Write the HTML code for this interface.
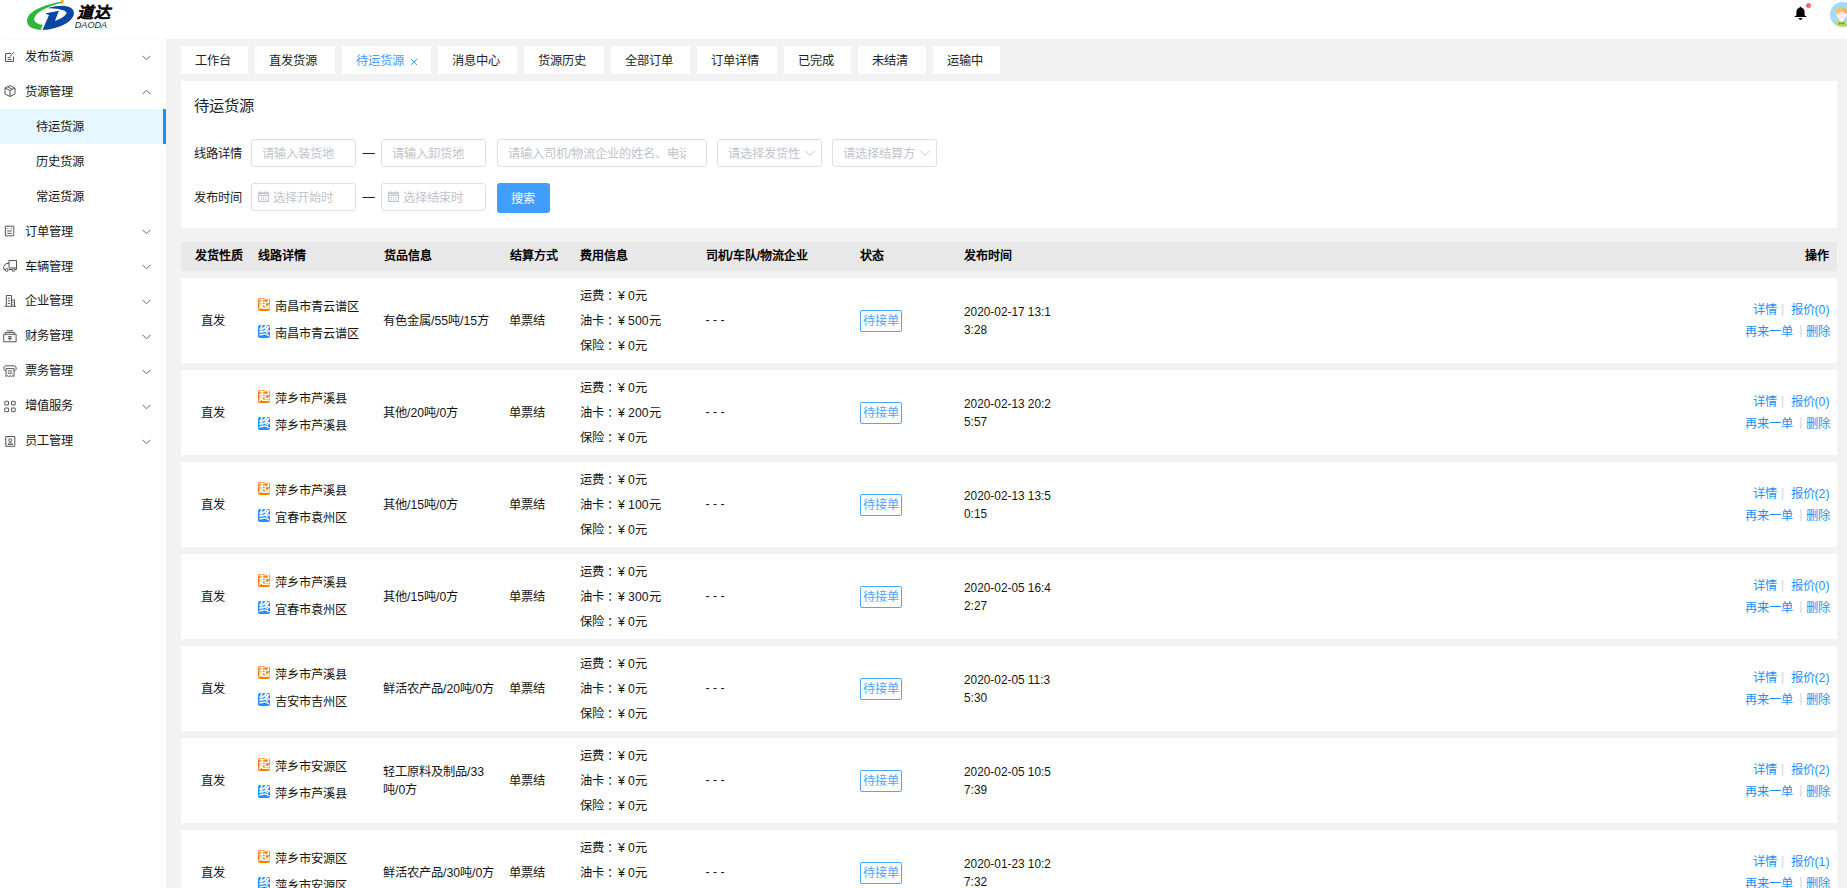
<!DOCTYPE html>
<html lang="zh-CN">
<head>
<meta charset="utf-8">
<title>待运货源</title>
<style>
*{box-sizing:border-box;margin:0;padding:0}
html,body{width:1847px;height:888px;overflow:hidden}
body{position:relative;background:#f2f2f2;font-family:"Liberation Sans",sans-serif;font-size:12.25px;color:#222;line-height:1}
.abs{position:absolute}
/* header */
#hd{left:0;top:0;width:1847px;height:37px;background:#fff;z-index:3}
#hs{left:0;top:37px;width:166px;height:2px;background:linear-gradient(#fafafa,#fcfcfc);z-index:4}
#hd2{left:0;top:0;width:1847px;height:39px;background:#fff;z-index:1}
/* sidebar */
#sb{left:0;top:39px;width:166px;height:849px;background:#fff;z-index:2}
.mi{position:relative;height:34.93px;line-height:36px;padding-left:25px;font-size:12.25px;color:#161616;white-space:nowrap}
.mi.sub{padding-left:36px}
.mi.on{background:#e6f7ff}
.mi.on:after{content:"";position:absolute;right:0;top:0;width:3px;height:34.93px;background:#1890ff}
.mi svg.ic{position:absolute;left:3px;top:10.5px;width:14px;height:14px;fill:none;stroke:#555;stroke-width:1}
.mi svg.ar{position:absolute;left:141.5px;top:15.5px;width:9px;height:6px;fill:none;stroke:#666;stroke-width:1}
/* tabs */
.tab{top:46px;height:28px;background:#fff;line-height:31px;text-align:left;padding-left:13.6px;font-size:12.25px;color:#222;white-space:nowrap}
.tab.on{color:#409eff;padding-left:14px}
/* filter card */
#fc{left:181px;top:81px;width:1656px;height:147px;background:#fff}
.lbl{font-size:12.25px;color:#222;white-space:nowrap}
.inp{height:28px;border:1px solid #dcdfe6;border-radius:3px;background:#fff;font-size:12.25px;color:#c0c4cc;line-height:29px;padding-left:10px;white-space:nowrap;overflow:hidden}
.dash{font-size:12.25px;color:#222}
/* table */
#th{left:181px;top:242px;width:1656px;height:29px;background:#e8e8e8;font-weight:700;font-size:12px;color:#000}
#th span{position:absolute;top:8px;white-space:nowrap}
.row{left:181px;width:1656px;height:85px;background:#fff;font-size:12.25px;color:#141414}
.row .c{position:absolute;white-space:nowrap}
.zf{left:19.7px;top:36.5px}
.rt{left:76.5px;padding-left:17px}
.r1{top:22.5px}.r2{top:49.5px}
.rt i{position:absolute;left:0.5px;top:-2.5px;width:12px;height:13px;border-radius:2px;color:#fff;font-style:normal;font-size:11px;line-height:12.5px;text-align:center;overflow:hidden;font-weight:700}
.qi{background:#ff7a0c}.zi{background:#1e90ff}
.gd{left:202px;top:36.5px}
.gd.g2{top:26px;line-height:17.5px}
.js{left:328px;top:36.5px}
.fe{left:398.5px;top:6.4px;line-height:25px}
.fe u{text-decoration:none;margin-left:3px;margin-right:-0.6px}
.dr{left:524.5px;top:36px}
.st{left:679px;top:32px;width:42px;height:22px;border:1px solid #4fa6ff;border-radius:2px;color:#4fa6ff;text-align:center;line-height:21px}
.dt{left:783px;top:25px;line-height:18px;font-size:11.85px}
.op{right:7.5px;top:22px;line-height:21.6px;text-align:right;color:#1890ff}
.op a{color:#1e90ff}
.op b{font-weight:400;color:#d0d3d9;margin:0 4.8px 0 3.8px;position:relative;top:-1.5px}
#btn{left:316px;top:102px;width:53px;height:30px;background:#409eff;border-radius:3px;color:#fff;font-size:12.25px;text-align:center;line-height:32px;padding-right:2px}
</style>
</head>
<body>

<!-- ================= HEADER ================= -->
<div id="hd2" class="abs"></div>
<div id="hs" class="abs"></div>
<div id="hd" class="abs">
  <svg class="abs" style="left:10px;top:0" width="120" height="40" viewBox="0 0 1847 616">
    <!-- green swoosh -->
    <path d="M800 24 C640 46 420 118 310 210 C230 290 250 400 360 440 C400 455 440 460 472 461 L505 382 C430 375 365 340 372 285 C385 205 560 100 800 44 Z" fill="#2db53c"/>
    <!-- blue D -->
    <path d="M575 128 C640 100 760 84 850 92 C960 104 1005 170 975 245 C935 340 760 445 500 462 L600 232 L538 208 L752 166 L692 322 C790 290 880 225 868 192 C850 150 700 128 575 128 Z" fill="#0a47a2"/>
    <!-- spark -->
    <path d="M792 0 L822 0 L832 30 L812 38 L800 58 L778 52 L788 30 L774 22 Z" fill="#f7b500"/>
    <path d="M800 30 L815 36 L802 56 L782 50 Z" fill="#e8732a"/>
    <text x="1032" y="272" font-family="Liberation Sans, sans-serif" font-size="240" font-weight="900" font-style="italic" fill="#0a0a0a" stroke="#0a0a0a" stroke-width="4" textLength="510" lengthAdjust="spacingAndGlyphs">道达</text>
    <text x="998" y="425" font-family="Liberation Sans, sans-serif" font-size="132" font-style="italic" fill="#1a1a1a" textLength="495" lengthAdjust="spacingAndGlyphs">DAODA</text>
  </svg>
  <!-- bell -->
  <svg class="abs" style="left:1793px;top:6px" width="15" height="15" viewBox="0 0 15 15">
    <path d="M7.5 0.7 C8 0.7 8.3 1 8.3 1.6 C10.5 2.2 11.6 4 11.6 6.4 L11.6 9 C11.6 9.6 12.2 10 13.4 10.3 L13.4 10.9 L1.6 10.9 L1.6 10.3 C2.8 10 3.4 9.6 3.4 9 L3.4 6.4 C3.4 4 4.5 2.2 6.7 1.6 C6.7 1 7 0.7 7.5 0.7 Z" fill="#000"/>
    <path d="M5.6 12 L9.4 12 C9.2 13.2 8.5 13.8 7.5 13.8 C6.5 13.8 5.8 13.2 5.6 12 Z" fill="#000"/>
  </svg>
  <div class="abs" style="left:1805.7px;top:2.7px;width:5.4px;height:5.4px;border-radius:50%;background:#f56c6c"></div>
  <!-- avatar -->
  <svg class="abs" style="left:1830.2px;top:2px" width="25" height="25" viewBox="0.5 0.5 25 25">
    <defs><clipPath id="avc"><circle cx="13" cy="13" r="12.5"/></clipPath></defs>
    <g clip-path="url(#avc)">
      <rect width="26" height="26" fill="#a3daf7"/><g transform="translate(-0.9 0.2)">
      <ellipse cx="13" cy="27" rx="9" ry="8.5" fill="#b9dc6e"/>
      <rect x="11" y="16.5" width="4" height="3" fill="#fff"/>
      <circle cx="13" cy="12.5" r="5.4" fill="#fdeaea"/>
      <path d="M7 12.5 C6.5 7 10 5.5 13 5.8 C17 5.5 20 8 19 12.5 C17 11.5 15 10.5 13.5 9 C12 11 9.5 12 7 12.5 Z" fill="#f9c466"/>
      <path d="M13.5 6 C17 5.5 20 8 19 12.5 C17 11.5 15 10.5 13.5 9 Z" fill="#f6b26b"/>
      <path d="M10.2 20.3 L12.6 21.7 L10.2 23.3 Z M15.8 20.3 L13.4 21.7 L15.8 23.3 Z" fill="#6aa415"/><rect x="12.2" y="21" width="1.6" height="1.5" fill="#6aa415"/></g>
    </g>
  </svg>
</div>

<!-- ================= SIDEBAR ================= -->
<div id="sb" class="abs">
  <div class="mi"><svg class="ic" viewBox="0 0 14 14"><path d="M8 3.5 H2.5 V11.5 H10.5 V6.5 M11 2 L7 6.5 M4.5 7.5 H7.5 M4.5 9.5 H8.5"/></svg>发布货源<svg class="ar" viewBox="0 0 9 6"><path d="M0.5 0.8 L4.5 4.8 L8.5 0.8"/></svg></div>
  <div class="mi"><svg class="ic" viewBox="0 0 14 14"><path d="M7 1.5 L12 4 V10 L7 12.5 L2 10 V4 Z M2 4 L7 6.5 L12 4 M7 6.5 V12.5 M4.5 2.8 L9.5 5.3"/></svg>货源管理<svg class="ar" viewBox="0 0 9 6"><path d="M0.5 5.2 L4.5 1.2 L8.5 5.2"/></svg></div>
  <div class="mi sub on">待运货源</div>
  <div class="mi sub">历史货源</div>
  <div class="mi sub">常运货源</div>
  <div class="mi"><svg class="ic" viewBox="0 0 14 14"><path d="M2.4 2.2 H10.8 V11.8 H2.4 Z M4.3 4.6 H5.3 M7.9 4.6 H8.9 M4.3 7 H8.9 M4.3 9.4 H8.9"/></svg>订单管理<svg class="ar" viewBox="0 0 9 6"><path d="M0.5 0.8 L4.5 4.8 L8.5 0.8"/></svg></div>
  <div class="mi"><svg class="ic" viewBox="0 0 14 14"><path d="M6 1.5 H13.5 V9 H6 Z M6 4.5 H3 L0.8 7.5 V10.5 H2 M6 10.5 H9 M12 10.5 H13.5 V9"/><circle cx="3.8" cy="11" r="1.4"/><circle cx="10.5" cy="11" r="1.4"/></svg>车辆管理<svg class="ar" viewBox="0 0 9 6"><path d="M0.5 0.8 L4.5 4.8 L8.5 0.8"/></svg></div>
  <div class="mi"><svg class="ic" viewBox="0 0 14 14"><path d="M1.5 12.3 H13 M3.3 12.3 V1.5 H8.5 V12.3 M8.5 6 H11.5 V12.3 M4.8 4.2 H7 M4.8 6.8 H7 M4.8 9.4 H7 M9.5 8.3 H10.5 M9.5 10.3 H10.5"/></svg>企业管理<svg class="ar" viewBox="0 0 9 6"><path d="M0.5 0.8 L4.5 4.8 L8.5 0.8"/></svg></div>
  <div class="mi"><svg class="ic" viewBox="0 0 14 14"><path d="M0.7 5.3 H13.1 V12.8 H0.7 Z M2.2 5.3 V3.5 H11.6 V5.3 M3.8 1.8 H10 M5 7.7 H8.8 M5 9.6 H8.8 M6.9 7.7 V11.6"/></svg>财务管理<svg class="ar" viewBox="0 0 9 6"><path d="M0.5 0.8 L4.5 4.8 L8.5 0.8"/></svg></div>
  <div class="mi"><svg class="ic" viewBox="0 0 14 14"><path d="M3 6.5 H2.2 C0.3 6.5 0.3 1.8 2.6 1.8 H11.4 C13.7 1.8 13.7 6.5 11.8 6.5 H11 M3 4.6 V12.6 L4.3 11.6 L5.7 12.6 L7 11.6 L8.3 12.6 L9.7 11.6 L11 12.6 V4.6 Z M4.8 7 H9.2 M4.8 9.2 H9.2"/></svg>票务管理<svg class="ar" viewBox="0 0 9 6"><path d="M0.5 0.8 L4.5 4.8 L8.5 0.8"/></svg></div>
  <div class="mi"><svg class="ic" viewBox="0 0 14 14"><rect x="1.8" y="2.3" width="3.7" height="3.7" rx="0.3"/><rect x="8.5" y="2.3" width="3.7" height="3.7" rx="0.3"/><rect x="1.8" y="9" width="3.7" height="3.7" rx="0.3"/><rect x="8.5" y="9" width="3.7" height="3.7" rx="0.3"/></svg>增值服务<svg class="ar" viewBox="0 0 9 6"><path d="M0.5 0.8 L4.5 4.8 L8.5 0.8"/></svg></div>
  <div class="mi"><svg class="ic" viewBox="0 0 14 14"><path d="M2.8 2.5 H11.8 V12.3 H2.8 Z M1.8 5.3 H2.8 M1.8 9.5 H2.8 M5 10.4 C5 8.2 9.6 8.2 9.6 10.4 Z"/><circle cx="7.3" cy="6.2" r="1.5"/></svg>员工管理<svg class="ar" viewBox="0 0 9 6"><path d="M0.5 0.8 L4.5 4.8 L8.5 0.8"/></svg></div>
</div>

<!-- ================= TABS ================= -->
<div class="abs tab" style="left:181px;width:67px">工作台</div>
<div class="abs tab" style="left:255px;width:80px">直发货源</div>
<div class="abs tab on" style="left:342px;width:89px">待运货源<svg style="position:absolute;left:68px;top:11.5px" width="8" height="8" viewBox="0 0 8 8"><path d="M1 1 L7 7 M7 1 L1 7" stroke="#409eff" stroke-width="1" fill="none"/></svg></div>
<div class="abs tab" style="left:438px;width:79px">消息中心</div>
<div class="abs tab" style="left:524px;width:80px">货源历史</div>
<div class="abs tab" style="left:611px;width:79px">全部订单</div>
<div class="abs tab" style="left:697px;width:80px">订单详情</div>
<div class="abs tab" style="left:784px;width:67px">已完成</div>
<div class="abs tab" style="left:858px;width:68px">未结清</div>
<div class="abs tab" style="left:933px;width:67px">运输中</div>

<!-- ================= FILTER CARD ================= -->
<div id="fc" class="abs">
  <div class="abs" style="left:13px;top:16px;font-size:15.3px;color:#222;line-height:18px">待运货源</div>

  <div class="abs lbl" style="left:13px;top:67px">线路详情</div>
  <div class="abs inp" style="left:70px;top:58px;width:105px">请输入装货地</div>
  <div class="abs dash" style="left:181.5px;top:66px">—</div>
  <div class="abs inp" style="left:200px;top:58px;width:105px">请输入卸货地</div>
  <div class="abs inp" style="left:316px;top:58px;width:210px"><span style="display:block;width:178px;overflow:hidden">请输入司机/物流企业的姓名、电话</span></div>
  <div class="abs inp" style="left:536px;top:58px;width:105px"><span style="display:block;width:72.5px;overflow:hidden">请选择发货性质</span><svg style="position:absolute;left:87px;top:10px" width="10" height="7" viewBox="0 0 10 7"><path d="M0.5 1 L5 5.5 L9.5 1" stroke="#c0c4cc" fill="none"/></svg></div>
  <div class="abs inp" style="left:651px;top:58px;width:105px"><span style="display:block;width:73px;overflow:hidden">请选择结算方式</span><svg style="position:absolute;left:87px;top:10px" width="10" height="7" viewBox="0 0 10 7"><path d="M0.5 1 L5 5.5 L9.5 1" stroke="#c0c4cc" fill="none"/></svg></div>

  <div class="abs lbl" style="left:13px;top:111px">发布时间</div>
  <div class="abs inp" style="left:70px;top:102px;width:105px;padding-left:20.5px"><svg style="position:absolute;left:5px;top:5.5px" width="13" height="13" viewBox="0 0 12 12"><path d="M1.5 2.5 H10.5 V10.5 H1.5 Z M1.5 3.4 H10.5 M1.5 5 H10.5 M3.5 1 V3 M8.5 1 V3 M3.5 7 H4.5 M5.5 7 H6.5 M7.5 7 H8.5 M3.5 8.8 H4.5 M5.5 8.8 H6.5 M7.5 8.8 H8.5" stroke="#c0c4cc" fill="none"/></svg><span style="display:block;width:61.5px;overflow:hidden">选择开始时间</span></div>
  <div class="abs dash" style="left:181.5px;top:110px">—</div>
  <div class="abs inp" style="left:200px;top:102px;width:105px;padding-left:20.5px"><svg style="position:absolute;left:5px;top:5.5px" width="13" height="13" viewBox="0 0 12 12"><path d="M1.5 2.5 H10.5 V10.5 H1.5 Z M1.5 3.4 H10.5 M1.5 5 H10.5 M3.5 1 V3 M8.5 1 V3 M3.5 7 H4.5 M5.5 7 H6.5 M7.5 7 H8.5 M3.5 8.8 H4.5 M5.5 8.8 H6.5 M7.5 8.8 H8.5" stroke="#c0c4cc" fill="none"/></svg><span style="display:block;width:61.5px;overflow:hidden">选择结束时间</span></div>
  <div id="btn" class="abs">搜索</div>
</div>

<!--TABLE-->
<div class="abs" id="th"><span style="left:13.5px">发货性质</span><span style="left:76.5px">线路详情</span><span style="left:202.5px">货品信息</span><span style="left:328.5px">结算方式</span><span style="left:398.5px">费用信息</span><span style="left:524.5px">司机/车队/物流企业</span><span style="left:678.5px">状态</span><span style="left:783px">发布时间</span><span style="right:8.3px">操作</span></div>
<div class="abs row" style="top:278px"><div class="c zf">直发</div><div class="c rt r1"><i class="qi">起</i>南昌市青云谱区</div><div class="c rt r2"><i class="zi">终</i>南昌市青云谱区</div><div class="c gd">有色金属/55吨/15方</div><div class="c js">单票结</div><div class="c fe">运费<u>：</u>¥ 0元<br>油卡<u>：</u>¥ 500元<br>保险<u>：</u>¥ 0元</div><div class="c dr">- - -</div><div class="c st">待接单</div><div class="c dt">2020-02-17 13:1<br>3:28</div><div class="c op"><a>详情</a><b>|</b><a style="margin-left:1.6px">报价(0)</a><br><a>再来一单</a><b style="margin-left:6px;margin-right:3.2px">|</b><a>删除</a></div></div>
<div class="abs row" style="top:370px"><div class="c zf">直发</div><div class="c rt r1"><i class="qi">起</i>萍乡市芦溪县</div><div class="c rt r2"><i class="zi">终</i>萍乡市芦溪县</div><div class="c gd">其他/20吨/0方</div><div class="c js">单票结</div><div class="c fe">运费<u>：</u>¥ 0元<br>油卡<u>：</u>¥ 200元<br>保险<u>：</u>¥ 0元</div><div class="c dr">- - -</div><div class="c st">待接单</div><div class="c dt">2020-02-13 20:2<br>5:57</div><div class="c op"><a>详情</a><b>|</b><a style="margin-left:1.6px">报价(0)</a><br><a>再来一单</a><b style="margin-left:6px;margin-right:3.2px">|</b><a>删除</a></div></div>
<div class="abs row" style="top:462px"><div class="c zf">直发</div><div class="c rt r1"><i class="qi">起</i>萍乡市芦溪县</div><div class="c rt r2"><i class="zi">终</i>宜春市袁州区</div><div class="c gd">其他/15吨/0方</div><div class="c js">单票结</div><div class="c fe">运费<u>：</u>¥ 0元<br>油卡<u>：</u>¥ 100元<br>保险<u>：</u>¥ 0元</div><div class="c dr">- - -</div><div class="c st">待接单</div><div class="c dt">2020-02-13 13:5<br>0:15</div><div class="c op"><a>详情</a><b>|</b><a style="margin-left:1.6px">报价(2)</a><br><a>再来一单</a><b style="margin-left:6px;margin-right:3.2px">|</b><a>删除</a></div></div>
<div class="abs row" style="top:554px"><div class="c zf">直发</div><div class="c rt r1"><i class="qi">起</i>萍乡市芦溪县</div><div class="c rt r2"><i class="zi">终</i>宜春市袁州区</div><div class="c gd">其他/15吨/0方</div><div class="c js">单票结</div><div class="c fe">运费<u>：</u>¥ 0元<br>油卡<u>：</u>¥ 300元<br>保险<u>：</u>¥ 0元</div><div class="c dr">- - -</div><div class="c st">待接单</div><div class="c dt">2020-02-05 16:4<br>2:27</div><div class="c op"><a>详情</a><b>|</b><a style="margin-left:1.6px">报价(0)</a><br><a>再来一单</a><b style="margin-left:6px;margin-right:3.2px">|</b><a>删除</a></div></div>
<div class="abs row" style="top:646px"><div class="c zf">直发</div><div class="c rt r1"><i class="qi">起</i>萍乡市芦溪县</div><div class="c rt r2"><i class="zi">终</i>吉安市吉州区</div><div class="c gd">鲜活农产品/20吨/0方</div><div class="c js">单票结</div><div class="c fe">运费<u>：</u>¥ 0元<br>油卡<u>：</u>¥ 0元<br>保险<u>：</u>¥ 0元</div><div class="c dr">- - -</div><div class="c st">待接单</div><div class="c dt">2020-02-05 11:3<br>5:30</div><div class="c op"><a>详情</a><b>|</b><a style="margin-left:1.6px">报价(2)</a><br><a>再来一单</a><b style="margin-left:6px;margin-right:3.2px">|</b><a>删除</a></div></div>
<div class="abs row" style="top:738px"><div class="c zf">直发</div><div class="c rt r1"><i class="qi">起</i>萍乡市安源区</div><div class="c rt r2"><i class="zi">终</i>萍乡市芦溪县</div><div class="c gd g2">轻工原料及制品/33<br>吨/0方</div><div class="c js">单票结</div><div class="c fe">运费<u>：</u>¥ 0元<br>油卡<u>：</u>¥ 0元<br>保险<u>：</u>¥ 0元</div><div class="c dr">- - -</div><div class="c st">待接单</div><div class="c dt">2020-02-05 10:5<br>7:39</div><div class="c op"><a>详情</a><b>|</b><a style="margin-left:1.6px">报价(2)</a><br><a>再来一单</a><b style="margin-left:6px;margin-right:3.2px">|</b><a>删除</a></div></div>
<div class="abs row" style="top:830px"><div class="c zf">直发</div><div class="c rt r1"><i class="qi">起</i>萍乡市安源区</div><div class="c rt r2"><i class="zi">终</i>萍乡市安源区</div><div class="c gd">鲜活农产品/30吨/0方</div><div class="c js">单票结</div><div class="c fe">运费<u>：</u>¥ 0元<br>油卡<u>：</u>¥ 0元<br>保险<u>：</u>¥ 0元</div><div class="c dr">- - -</div><div class="c st">待接单</div><div class="c dt">2020-01-23 10:2<br>7:32</div><div class="c op"><a>详情</a><b>|</b><a style="margin-left:1.6px">报价(1)</a><br><a>再来一单</a><b style="margin-left:6px;margin-right:3.2px">|</b><a>删除</a></div></div>
<!--/TABLE-->

</body>
</html>
